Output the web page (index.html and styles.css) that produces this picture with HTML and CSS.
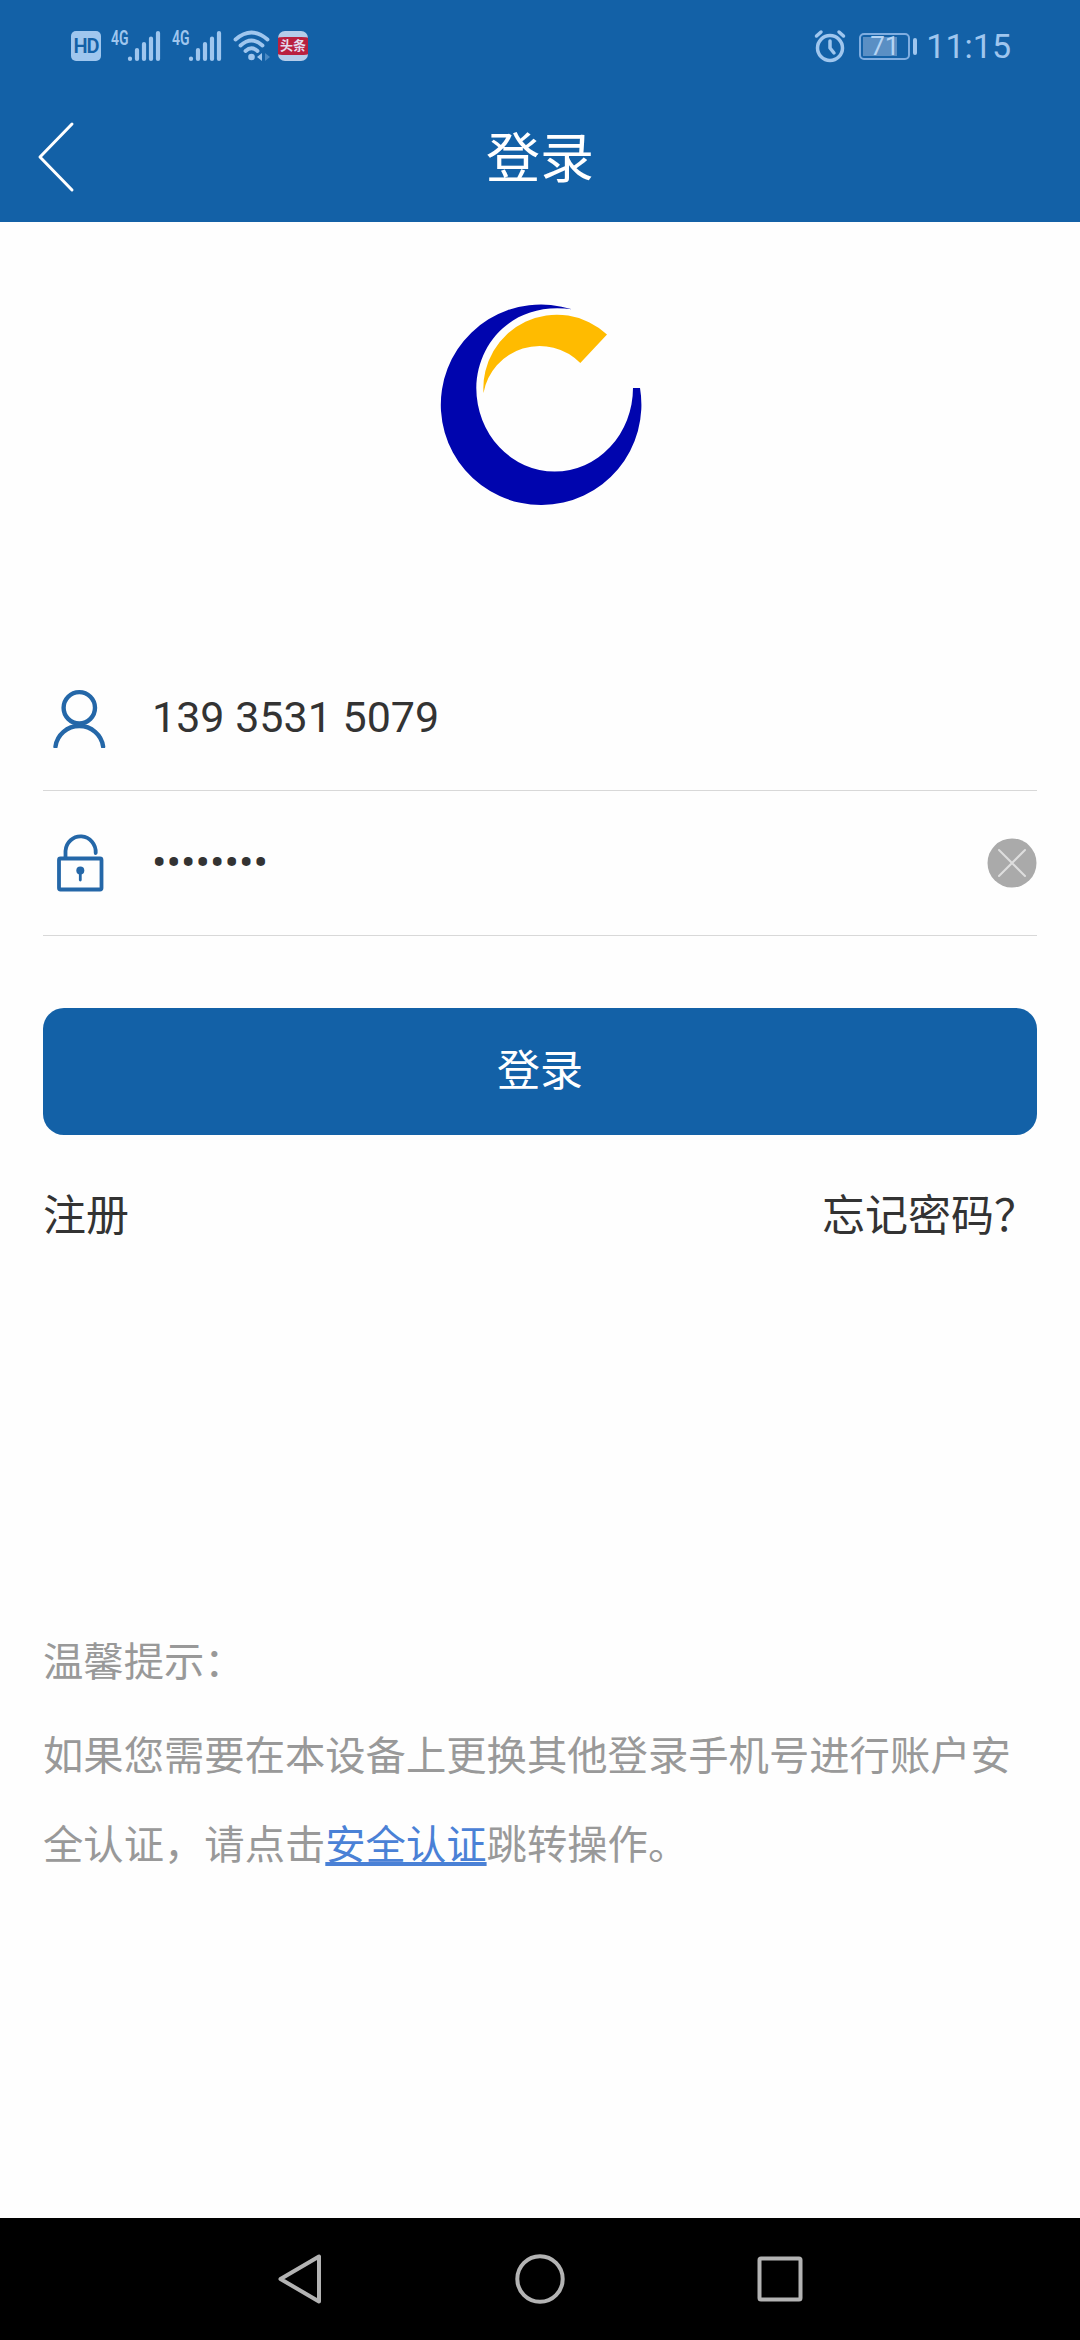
FILE: index.html
```html
<!DOCTYPE html>
<html lang="zh-CN">
<head>
    <meta charset="UTF-8">
    <meta name="viewport" content="width=device-width, initial-scale=1.0">
    <title>登录</title>
    <link rel="stylesheet" href="styles.css">
</head>
<body>
    <div class="screen">
        <div class="status-bar">
            <div class="status-left">
                <span class="hd">HD</span>
                <span class="signal">
                    <span class="net">4G</span>
                    <svg width="34" height="32" viewBox="0 0 34 32">
                        <path d="M3 28.5v.5M10 20v9M17 14v15M24 8.5v20.5M31 3v26" stroke-width="4.2"/>
                    </svg>
                </span>
                <span class="signal">
                    <span class="net">4G</span>
                    <svg width="34" height="32" viewBox="0 0 34 32">
                        <path d="M3 28.5v.5M10 20v9M17 14v15M24 8.5v20.5M31 3v26" stroke-width="4.2"/>
                    </svg>
                </span>
                <svg class="wifi" width="38" height="32" viewBox="0 0 38 32">
                    <path d="M2.5 9.500Q18.500-4.500 34.500 9.500M7.500 15.500Q18.500 5.500 29.500 15.500M12.500 21Q18.500 15.500 24.500 21" stroke-width="3.8"/>
                    <circle class="solid" cx="18.5" cy="27" r="3.3"/>
                    <path class="solid" d="M29 23v8l-5-4z"/>
                    <path class="solid dim" d="M32 23v8l5-4z"/>
                </svg>
                <span class="news">头条</span>
            </div>
            <div class="status-right">
                <svg width="32" height="34" viewBox="0 0 32 34">
                    <circle cx="16" cy="19" r="12.5" stroke-width="3.5"/>
                    <path d="M16 12v7l4 5" stroke-width="3.5"/>
                    <path d="M2.500 7l4.500-4M29.500 7l-4.500-4" stroke-width="3.5"/>
                </svg>
                <span class="battery"><span class="level"></span><span class="percent">71</span></span>
                <span class="battery-cap"></span>
                <span class="time">11:15</span>
            </div>
        </div>

        <div class="title-bar">
            <svg class="back" width="40" height="74" viewBox="0 0 40 74">
                <path d="M36 4L4 37l32 33"/>
            </svg>
            <h1>登录</h1>
        </div>

        <div class="container">
            <svg class="logo" width="204" height="204" viewBox="438 302 204 204">
                <path fill="#0005ae" d="M572 309.300A100.300 100.300 0 1 0 640 388H633A78.350 83.500 0 0 1 476.300 388C477 342 514 301 572 309.300z"/>
                <path fill="#ffbb00" d="M483.500 393A73.500 73.500 0 0 1 607 334.500L580.300 363A57 57 0 0 0 483.500 393z"/>
            </svg>

            <form class="login-form">
                <div class="form-group">
                    <svg width="60" height="60" viewBox="50 688 60 60">
                        <circle cx="79.3" cy="707.8" r="15.7"/>
                        <path d="M55.500 746.500a24 23.500 0 0 1 47.600 0"/>
                    </svg>
                    <span class="value">139 3531 5079</span>
                </div>
                <div class="form-group">
                    <svg class="lock" width="60" height="60" viewBox="50 833 60 60">
                        <rect x="59" y="858.5" width="42.5" height="31" rx="1.5"/>
                        <path d="M65.500 858v-7a15 15.500 0 0 1 30.200 2"/>
                        <circle class="hole" cx="80.3" cy="870.5" r="4"/>
                        <path d="M80.300 871v9" stroke-width="2.8"/>
                    </svg>
                    <span class="value">••••••••</span>
                    <svg class="clear" width="50" height="50" viewBox="0 0 50 50">
                        <circle cx="25" cy="25" r="24.5"/>
                        <path d="M12 12l26 26M38 12L12 38"/>
                    </svg>
                </div>
                <button type="button" class="btn">登录</button>
            </form>

            <div class="links">
                <span>注册</span>
                <span>忘记密码？</span>
            </div>

            <div class="tips">
                <p class="tips-title">温馨提示：</p>
                <p>如果您需要在本设备上更换其他登录手机号进行账户安全认证，请点击<a href="#">安全认证</a>跳转操作。</p>
            </div>
        </div>

        <div class="nav-bar">
            <svg width="52" height="52" viewBox="0 0 52 52"><path d="M6.500 26L45 3.500v45z"/></svg>
            <svg width="52" height="52" viewBox="0 0 52 52"><circle cx="26" cy="26" r="22.7"/></svg>
            <svg width="52" height="52" viewBox="0 0 52 52"><rect x="5.5" y="5.5" width="41" height="41" rx="1.5"/></svg>
        </div>
    </div>
</body>
</html>
```
FILE: styles.css
```css
body {
    font-family: Roboto, "Noto Sans CJK SC", sans-serif;
    margin: 0;
    padding: 0;
    background-color: #fefefe;
    color: #333;
}
svg {
    display: block;
    flex-shrink: 0;
    fill: none;
    stroke-linecap: round;
    stroke-linejoin: round;
}
.screen {
    width: 1080px;
    height: 2340px;
    display: flex;
    flex-direction: column;
    overflow: hidden;
}

/* status bar */
.status-bar {
    height: 92px;
    box-sizing: border-box;
    padding: 0 70px 0 71px;
    background-color: #1361a7;
    color: #9fc6ee;
    display: flex;
    justify-content: space-between;
    align-items: center;
}
.status-bar svg {
    stroke: #9fc6ee;
}
.status-bar .solid {
    fill: #9fc6ee;
    stroke: none;
}
.status-bar .dim {
    opacity: 0.4;
}
.status-left,
.status-right,
.signal {
    display: flex;
    align-items: center;
}
.hd {
    width: 30px;
    height: 30px;
    margin-right: 10px;
    border-radius: 5px;
    background-color: #9fc6ee;
    color: #1361a7;
    font-size: 20px;
    font-weight: 600;
    line-height: 30px;
    text-align: center;
    letter-spacing: -1px;
}
.signal {
    width: 50px;
    margin-right: 11px;
}
.net {
    width: 16px;
    height: 32px;
    font-size: 20px;
    font-weight: 600;
    line-height: 16px;
    transform: scaleX(0.7);
    transform-origin: left;
}
.wifi {
    margin-right: 7px;
}
.news {
    width: 30px;
    height: 18px;
    border: solid #b5cdea;
    border-width: 6px 0;
    border-radius: 7px;
    background-color: #b9203f;
    color: #e3dcef;
    font-size: 13px;
    font-weight: bold;
    line-height: 18px;
    text-align: center;
}
.status-right {
    margin-right: -1px;
}
.battery {
    width: 51px;
    height: 27px;
    box-sizing: border-box;
    margin-left: 13px;
    padding: 2px;
    border: 2px solid #7fade0;
    border-radius: 5px;
    display: grid;
}
.battery .level,
.battery .percent {
    grid-area: 1 / 1;
}
.level {
    width: 34px;
    background-color: #5a8fc4;
}
.percent {
    color: #b4d4f4;
    font-size: 26px;
    line-height: 19px;
    text-align: center;
}
.battery-cap {
    width: 4px;
    height: 17px;
    margin: 0 9px 0 3px;
    border-radius: 2px;
    background-color: #9fc6ee;
}
.time {
    font-size: 34px;
}

/* title bar */
.title-bar {
    height: 130px;
    background-color: #1361a7;
    color: #fff;
    display: grid;
    grid-template-columns: 108px 1fr 108px;
    align-items: center;
}
.back {
    margin-left: 36px;
    stroke: #fff;
    stroke-width: 3;
}
.title-bar h1 {
    margin: 0;
    padding-top: 6px;
    font-size: 54px;
    font-weight: normal;
    line-height: 60px;
    text-align: center;
}

.container {
    flex: 1;
    padding: 80px 43px 0;
}
.logo {
    margin: 0 auto 140px;
}

/* form */
.form-group {
    height: 144px;
    padding: 0 0 0 7px;
    border-bottom: 1px solid #d8d8d8;
    display: flex;
    align-items: center;
}
.form-group svg {
    stroke: #2467a8;
    stroke-width: 4.4;
}
.form-group .lock {
    stroke-width: 3.8;
}
.lock .hole {
    fill: #2467a8;
    stroke: none;
}
.value {
    flex: 1;
    margin-left: 42px;
    padding-bottom: 3px;
    font-size: 43px;
    line-height: 50px;
}
.form-group .clear {
    fill: #aaa;
    stroke: none;
}
.clear path {
    stroke: #dedede;
    stroke-width: 2;
}
.btn {
    display: block;
    width: 100%;
    height: 127px;
    margin-top: 72px;
    padding: 0 0 10px;
    border: none;
    border-radius: 21px;
    background-color: #1361a7;
    color: #fff;
    font-family: inherit;
    font-size: 43px;
}
.links {
    margin-top: 49px;
    display: flex;
    justify-content: space-between;
    font-size: 43px;
    line-height: 64px;
}

/* tips */
.tips {
    margin-top: 370px;
    color: #999;
    font-size: 40.35px;
    line-height: 89px;
}
.tips p {
    margin: 0;
}
.tips .tips-title {
    margin-bottom: 5px;
}
.tips a {
    color: #4a81d6;
    text-decoration: underline;
    text-decoration-thickness: 4px;
    text-underline-offset: 3px;
    text-decoration-skip-ink: none;
}

/* android navigation */
.nav-bar {
    height: 122px;
    background-color: #000;
    display: flex;
    justify-content: center;
    align-items: center;
    gap: 188px;
}
.nav-bar svg {
    stroke: #b3b3b3;
    stroke-width: 4;
}
```
